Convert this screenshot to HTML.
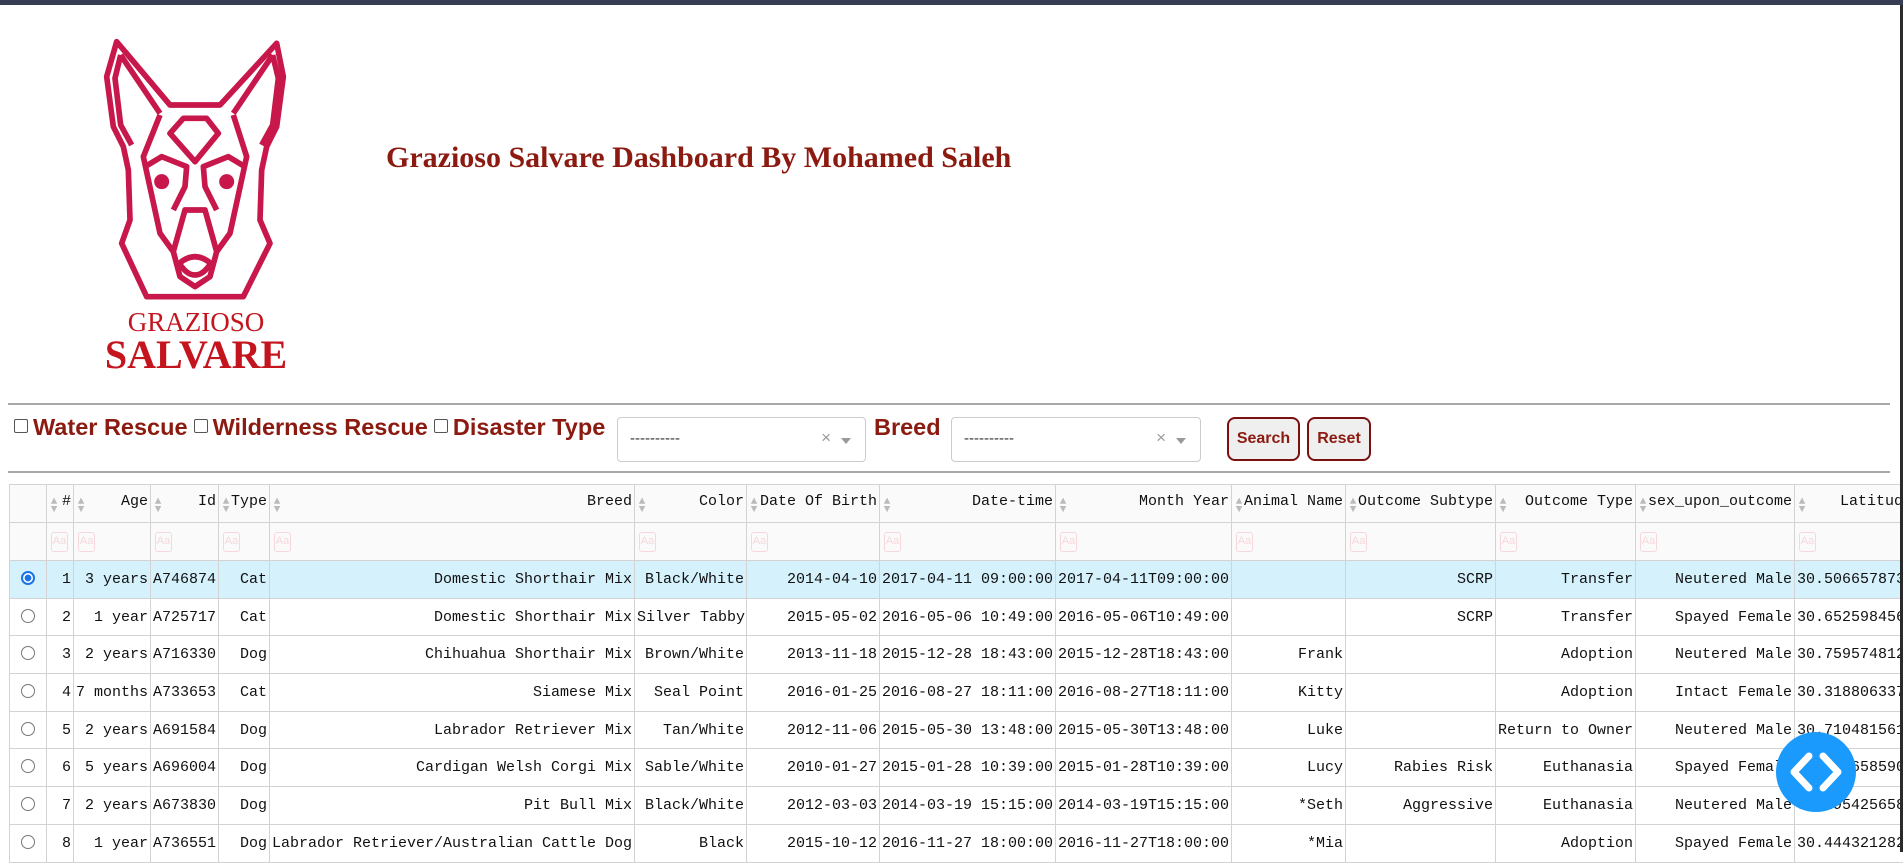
<!DOCTYPE html>
<html><head><meta charset="utf-8">
<style>
*{box-sizing:border-box}
body{margin:0;width:1903px;height:852px;overflow:hidden;background:#fff;position:relative;font-family:"Liberation Sans",sans-serif}
.topbar{position:absolute;left:0;top:0;width:1903px;height:5px;background:#373d52}
.rbar{position:absolute;right:0;top:5px;width:3px;height:847px;background:#2a2a2a}
.title{position:absolute;left:386px;top:141px;font-family:"Liberation Serif",serif;font-weight:bold;font-size:30px;color:#8b1a10;white-space:nowrap}
.hr{position:absolute;left:8px;width:1882px;height:2px;background:#a8a8a8}
.lbl{position:absolute;top:414px;font-weight:bold;font-size:23.5px;color:#8b1a10;white-space:nowrap}
.cb{display:inline-block;width:14px;height:14px;border:1px solid #555;border-radius:2px;vertical-align:2px;margin-right:5px;background:#fff}
.dd{position:absolute;top:417px;height:45px;border:1px solid #ccc;border-radius:4px;background:#fff}
.dd .t{position:absolute;left:12px;top:12px;font-size:15px;color:#333}
.dd .x{position:absolute;right:34px;top:10px;font-size:17px;color:#999}
.dd .a{position:absolute;right:14px;top:20px;width:0;height:0;border-left:5px solid transparent;border-right:5px solid transparent;border-top:6px solid #999}
.btn{position:absolute;top:417px;height:44px;border:2px solid #7a1010;border-radius:8px;background:#efefef;color:#8b1a10;font-weight:bold;font-size:16px;text-align:center;line-height:40px}
table{position:absolute;left:9px;top:484px;width:1905px;border-collapse:collapse;table-layout:fixed;font-family:"Liberation Mono",monospace;font-size:15px;color:#111}
td{border:1px solid #d3d3d3;height:37.7px;padding:0 2px;text-align:right;white-space:nowrap;overflow:hidden}
tr.h td{background:#fafafa;height:38px;position:relative}
tr.f td{background:#fafafa;height:38px;text-align:left}
tr.sel td{background:#d4f1fc}
.s{float:left;color:#bbb;font-size:11px;line-height:8px;margin-top:5px;width:10px;text-align:center}
.aa{display:inline-block;width:17px;height:20px;border:1.5px solid #f6d8dc;border-radius:3px;color:#f6d8dc;font-family:"Liberation Sans",sans-serif;font-size:11px;line-height:17px;text-align:center;margin-left:2px}
.r{display:inline-block;width:14px;height:14px;border:1px solid #777;border-radius:50%;vertical-align:-2px}
.r.on{border:2px solid #1a73e8;background:radial-gradient(circle,#1a73e8 45%,#fff 50%)}
td.c{text-align:center}
.fab{position:absolute;left:1776px;top:732px;width:80px;height:80px;border-radius:50%;background:#1a9afc}
</style></head><body>
<div class="topbar"></div>
<svg style="position:absolute;left:90px;top:30px" width="220" height="282" viewBox="0 0 660 846" fill="none" stroke="#c8174a" stroke-width="17" stroke-linejoin="round">
<path d="M80 35 L50 140 L70 290 L100 350 L115 420 L120 570 L95 640 L170 800 L460 800 L540 640 L510 570 L515 420 L530 350 L560 290 L580 140 L560 40 L390 225 L240 225 Z"/>
<path d="M92 75 L75 145 L92 285 L125 345 M92 75 L210 250"/>
<path d="M548 75 L565 145 L548 285 L515 345 M548 75 L430 250"/>
<path d="M240 310 L280 265 L350 265 L385 310 L315 395 Z"/>
<path d="M210 255 L160 380 L210 610 L250 665 M430 255 L470 380 L420 610 L380 665"/>
<path d="M165 410 L215 380 L290 410 L285 470 L250 540 M465 410 L415 380 L340 410 L345 470 L380 540"/>
<path d="M250 665 L285 540 L345 540 L380 665 L360 740 L315 770 L270 740 Z"/>
<path d="M268 700 Q315 660 362 700 Q340 735 315 735 Q290 735 268 700Z"/>
<circle cx="215" cy="455" r="14" fill="#c8174a"/><circle cx="410" cy="455" r="14" fill="#c8174a"/>
</svg>
<div style="position:absolute;left:96px;top:307px;width:200px;text-align:center;font-family:'Liberation Serif',serif;color:#c4141e;font-size:27px;line-height:30px">GRAZIOSO</div>
<div style="position:absolute;left:86px;top:332px;width:220px;text-align:center;font-family:'Liberation Serif',serif;font-weight:bold;color:#c4141e;font-size:40px;line-height:46px">SALVARE</div>
<div class="title">Grazioso Salvare Dashboard By Mohamed Saleh</div>
<div class="hr" style="top:403px"></div>
<div class="lbl" style="left:14px"><span class="cb"></span>Water Rescue<span class="cb" style="margin-left:6px"></span>Wilderness Rescue<span class="cb" style="margin-left:6px"></span>Disaster Type</div>
<div class="dd" style="left:617px;width:249px"><span class="t">----------</span><span class="x">×</span><span class="a"></span></div>
<div class="lbl" style="left:874px;top:414px">Breed</div>
<div class="dd" style="left:951px;width:250px"><span class="t">----------</span><span class="x">×</span><span class="a"></span></div>
<div class="btn" style="left:1227px;width:73px">Search</div>
<div class="btn" style="left:1307px;width:64px">Reset</div>
<div class="hr" style="top:471px"></div>
<table>
<colgroup><col style="width:37px"><col style="width:27px"><col style="width:77px"><col style="width:68px"><col style="width:51px"><col style="width:365px"><col style="width:112px"><col style="width:133px"><col style="width:176px"><col style="width:176px"><col style="width:114px"><col style="width:150px"><col style="width:140px"><col style="width:159px"><col style="width:120px"></colgroup>
<tr class="h"><td></td><td><span class="s">▲<br>▼</span>#</td><td><span class="s">▲<br>▼</span>Age</td><td><span class="s">▲<br>▼</span>Id</td><td><span class="s">▲<br>▼</span>Type</td><td><span class="s">▲<br>▼</span>Breed</td><td><span class="s">▲<br>▼</span>Color</td><td><span class="s">▲<br>▼</span>Date Of Birth</td><td><span class="s">▲<br>▼</span>Date-time</td><td><span class="s">▲<br>▼</span>Month Year</td><td><span class="s">▲<br>▼</span>Animal Name</td><td><span class="s">▲<br>▼</span>Outcome Subtype</td><td><span class="s">▲<br>▼</span>Outcome Type</td><td><span class="s">▲<br>▼</span>sex_upon_outcome</td><td><span class="s">▲<br>▼</span>Latitude</td></tr>
<tr class="f"><td></td><td><span class="aa">Aa</span></td><td><span class="aa">Aa</span></td><td><span class="aa">Aa</span></td><td><span class="aa">Aa</span></td><td><span class="aa">Aa</span></td><td><span class="aa">Aa</span></td><td><span class="aa">Aa</span></td><td><span class="aa">Aa</span></td><td><span class="aa">Aa</span></td><td><span class="aa">Aa</span></td><td><span class="aa">Aa</span></td><td><span class="aa">Aa</span></td><td><span class="aa">Aa</span></td><td><span class="aa">Aa</span></td></tr>
<tr class="sel"><td class="c"><span class="r on"></span></td><td>1</td><td>3 years</td><td>A746874</td><td>Cat</td><td>Domestic Shorthair Mix</td><td>Black/White</td><td>2014-04-10</td><td>2017-04-11 09:00:00</td><td>2017-04-11T09:00:00</td><td></td><td>SCRP</td><td>Transfer</td><td>Neutered Male</td><td style="text-align:left">30.5066578739</td></tr>
<tr><td class="c"><span class="r"></span></td><td>2</td><td>1 year</td><td>A725717</td><td>Cat</td><td>Domestic Shorthair Mix</td><td>Silver Tabby</td><td>2015-05-02</td><td>2016-05-06 10:49:00</td><td>2016-05-06T10:49:00</td><td></td><td>SCRP</td><td>Transfer</td><td>Spayed Female</td><td style="text-align:left">30.6525984560</td></tr>
<tr><td class="c"><span class="r"></span></td><td>3</td><td>2 years</td><td>A716330</td><td>Dog</td><td>Chihuahua Shorthair Mix</td><td>Brown/White</td><td>2013-11-18</td><td>2015-12-28 18:43:00</td><td>2015-12-28T18:43:00</td><td>Frank</td><td></td><td>Adoption</td><td>Neutered Male</td><td style="text-align:left">30.7595748121</td></tr>
<tr><td class="c"><span class="r"></span></td><td>4</td><td>7 months</td><td>A733653</td><td>Cat</td><td>Siamese Mix</td><td>Seal Point</td><td>2016-01-25</td><td>2016-08-27 18:11:00</td><td>2016-08-27T18:11:00</td><td>Kitty</td><td></td><td>Adoption</td><td>Intact Female</td><td style="text-align:left">30.3188063375</td></tr>
<tr><td class="c"><span class="r"></span></td><td>5</td><td>2 years</td><td>A691584</td><td>Dog</td><td>Labrador Retriever Mix</td><td>Tan/White</td><td>2012-11-06</td><td>2015-05-30 13:48:00</td><td>2015-05-30T13:48:00</td><td>Luke</td><td></td><td>Return to Owner</td><td>Neutered Male</td><td style="text-align:left">30.7104815610</td></tr>
<tr><td class="c"><span class="r"></span></td><td>6</td><td>5 years</td><td>A696004</td><td>Dog</td><td>Cardigan Welsh Corgi Mix</td><td>Sable/White</td><td>2010-01-27</td><td>2015-01-28 10:39:00</td><td>2015-01-28T10:39:00</td><td>Lucy</td><td>Rabies Risk</td><td>Euthanasia</td><td>Spayed Female</td><td style="text-align:left">30.3736585900</td></tr>
<tr><td class="c"><span class="r"></span></td><td>7</td><td>2 years</td><td>A673830</td><td>Dog</td><td>Pit Bull Mix</td><td>Black/White</td><td>2012-03-03</td><td>2014-03-19 15:15:00</td><td>2014-03-19T15:15:00</td><td>*Seth</td><td>Aggressive</td><td>Euthanasia</td><td>Neutered Male</td><td style="text-align:left">30.2954256580</td></tr>
<tr><td class="c"><span class="r"></span></td><td>8</td><td>1 year</td><td>A736551</td><td>Dog</td><td>Labrador Retriever/Australian Cattle Dog</td><td>Black</td><td>2015-10-12</td><td>2016-11-27 18:00:00</td><td>2016-11-27T18:00:00</td><td>*Mia</td><td></td><td>Adoption</td><td>Spayed Female</td><td style="text-align:left">30.4443212820</td></tr>
</table>
<div class="fab"><svg width="80" height="80" viewBox="0 0 80 80" fill="none" stroke="#fff" stroke-width="7" stroke-linecap="round" stroke-linejoin="round"><path d="M33 24 L18 40 L33 56 M47 24 L62 40 L47 56"/></svg></div>
<div class="rbar"></div>
</body></html>
